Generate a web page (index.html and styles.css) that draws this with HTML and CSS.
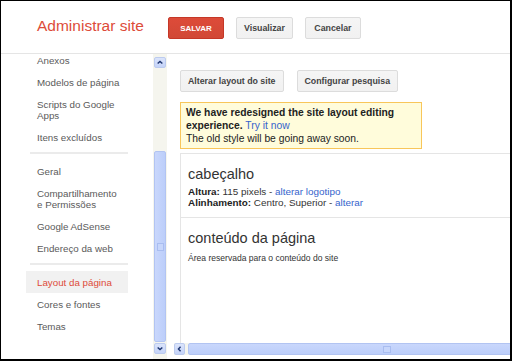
FILE: index.html
```html
<!DOCTYPE html>
<html lang="pt">
<head>
    <meta charset="UTF-8">
    <title>Administrar site</title>
    <link rel="stylesheet" href="styles.css">
</head>
<body>

<div class="frame">
    <header class="topbar">
        <div class="site-title">Administrar site</div>
        <div class="top-actions">
            <button class="btn btn-save">SALVAR</button>
            <button class="btn">Visualizar</button>
            <button class="btn">Cancelar</button>
        </div>
    </header>

    <div class="workspace">
        <nav class="sidebar">
            <ul class="nav-list">
                <li class="nav-item">Anexos</li>
                <li class="nav-item">Modelos de página</li>
                <li class="nav-item">Scripts do Google Apps</li>
                <li class="nav-item">Itens excluídos</li>
                <li class="nav-sep"></li>
                <li class="nav-item">Geral</li>
                <li class="nav-item">Compartilhamento e Permissões</li>
                <li class="nav-item">Google AdSense</li>
                <li class="nav-item">Endereço da web</li>
                <li class="nav-sep"></li>
                <li class="nav-item active">Layout da página</li>
                <li class="nav-item">Cores e fontes</li>
                <li class="nav-item">Temas</li>
            </ul>
        </nav>

        <div class="vscroll">
            <div class="sb-btn">
                <svg width="12" height="11" viewBox="0 0 12 11"><path d="M3.2 6.8 L6 4.2 L8.8 6.8" fill="none" stroke="#1d3570" stroke-width="1.7"/></svg>
            </div>
            <div class="vtrack">
                <div class="vthumb"><span class="grip"></span></div>
            </div>
            <div class="sb-btn">
                <svg width="12" height="11" viewBox="0 0 12 11"><path d="M3.2 4.2 L6 6.8 L8.8 4.2" fill="none" stroke="#1d3570" stroke-width="1.7"/></svg>
            </div>
        </div>

        <main class="main">
            <div class="main-scroll">
                <div class="layout-actions">
                    <button class="btn">Alterar layout do site</button>
                    <button class="btn">Configurar pesquisa</button>
                </div>

                <div class="notice">
                    <div><b>We have redesigned the site layout editing</b></div>
                    <div><b>experience.</b> <a href="#">Try it now</a></div>
                    <div>The old style will be going away soon.</div>
                </div>

                <div class="layout-box">
                    <section class="layout-section">
                        <h3>cabeçalho</h3>
                        <div class="meta">
                            <div><b>Altura:</b> 115 pixels - <a href="#">alterar logotipo</a></div>
                            <div><b>Alinhamento:</b> Centro, Superior - <a href="#">alterar</a></div>
                        </div>
                    </section>
                    <section class="layout-section">
                        <h3>conteúdo da página</h3>
                        <div class="desc">Área reservada para o conteúdo do site</div>
                    </section>
                </div>
            </div>

            <div class="hscroll">
                <div class="sb-btn">
                    <svg width="11" height="12" viewBox="0 0 11 12"><path d="M6.8 3.2 L4.2 6 L6.8 8.8" fill="none" stroke="#1d3570" stroke-width="1.7"/></svg>
                </div>
                <div class="hthumb"><span class="grip"></span></div>
            </div>
        </main>
    </div>
</div>

</body>
</html>
```

FILE: styles.css
```css
body {
    margin: 0;
    background: #fff;
    font-family: 'Liberation Sans', Arial, sans-serif;
}

.frame {
    width: 509px;
    height: 358px;
    border: solid #000;
    border-width: 1px 2px 2px 1px;
    display: flex;
    flex-direction: column;
    overflow: hidden;
    background: #fff;
}

/* top bar */
.topbar {
    height: 53px;
    box-sizing: border-box;
    border-bottom: 1px solid #e5e5e5;
    display: flex;
    align-items: flex-start;
    padding: 16px 0 0 36px;
    flex-shrink: 0;
}

.site-title {
    width: 131px;
    font-size: 15.5px;
    line-height: 17px;
    color: #dd4b39;
}

.top-actions {
    display: flex;
    gap: 12px;
}

.btn {
    height: 22px;
    min-width: 56px;
    box-sizing: border-box;
    padding: 0 7px;
    border: 1px solid #dcdcdc;
    border-radius: 2px;
    background: linear-gradient(#f5f5f5, #f1f1f1);
    color: #444;
    font-family: 'Liberation Sans', Arial, sans-serif;
    font-size: 8.8px;
    font-weight: bold;
    cursor: pointer;
}

.btn-save {
    background: linear-gradient(#dd4b39, #d14836);
    border-color: #c53727;
    color: #fff;
    font-size: 8px;
}

/* body */
.workspace {
    flex: 1;
    display: flex;
    min-height: 0;
}

.sidebar {
    width: 152px;
    flex-shrink: 0;
    overflow: hidden;
}

.nav-list {
    list-style: none;
    margin: -5px 0 0 25px;
    padding: 0;
    width: 102px;
}

.nav-item {
    padding: 6px 4px 5px 11px;
    font-size: 9.75px;
    line-height: 11px;
    color: #5a5a5a;
}

.nav-item.active {
    background: #f1f1f1;
    color: #dd4b39;
}

.nav-sep {
    height: 2px;
    background: #ebebeb;
    margin: 4px 0 6px 4px;
}

/* scrollbars */
.vscroll {
    width: 14px;
    flex-shrink: 0;
    background: #f5f5ee;
    display: flex;
    flex-direction: column;
    align-items: center;
    padding: 3px 0 5px;
    box-sizing: border-box;
}

.sb-btn {
    width: 12px;
    height: 11px;
    box-sizing: border-box;
    background: linear-gradient(#dbe4fb, #c4d3f8);
    border: 1px solid #bccbef;
    border-radius: 2px;
    display: flex;
    align-items: center;
    justify-content: center;
    flex-shrink: 0;
}

.sb-btn svg {
    display: block;
}

.vtrack {
    flex: 1;
    display: flex;
    flex-direction: column;
    justify-content: flex-end;
    padding-bottom: 1px;
}

.vthumb {
    width: 12px;
    height: 191px;
    box-sizing: border-box;
    background: linear-gradient(to right, #c9d7fc, #bccefa);
    border: 1px solid #b2c4f2;
    border-radius: 2px;
    display: flex;
    align-items: center;
    justify-content: center;
}

.grip {
    width: 5px;
    height: 6px;
    border: 1px solid #a9bdf0;
    background: #c7d6fb;
}

.main {
    flex: 1;
    min-width: 0;
    display: flex;
    flex-direction: column;
}

.main-scroll {
    flex: 1;
    min-height: 0;
    overflow: hidden;
    padding: 16px 0 0 13px;
    display: flex;
    flex-direction: column;
}

.layout-actions {
    display: flex;
    gap: 13px;
}

.notice {
    width: 242px;
    box-sizing: border-box;
    margin-top: 10px;
    padding: 4px 5px 3px;
    border: 1px solid #f8c65a;
    background: #fffcdb;
    color: #222;
    font-size: 10.3px;
    line-height: 12.8px;
    white-space: nowrap;
}

.notice a,
.layout-section a {
    color: #3563cc;
    text-decoration: none;
}

.layout-box {
    flex: 1;
    width: 420px;
    margin-top: 4px;
    border-top: 1px solid #e5e5e5;
    border-left: 1px solid #e5e5e5;
}

.layout-section {
    padding: 12px 0 9px 7px;
    border-bottom: 1px solid #e5e5e5;
}

.layout-section:last-child {
    border-bottom: none;
}

.layout-section h3 {
    margin: 0;
    font-size: 14.5px;
    line-height: 17px;
    font-weight: normal;
    color: #333;
}

.meta {
    margin-top: 3px;
    font-size: 9.9px;
    line-height: 11px;
    color: #333;
}

.meta b {
    color: #222;
}

.desc {
    margin-top: 6px;
    font-size: 8.55px;
    line-height: 11px;
    color: #333;
}

.hscroll {
    height: 12px;
    margin: 0 0 4px 7px;
    display: flex;
    gap: 3px;
    overflow: hidden;
    background: #f5f5ee;
    flex-shrink: 0;
}

.hscroll .sb-btn {
    width: 11px;
    height: 12px;
}

.hthumb {
    width: 398px;
    flex-shrink: 0;
    box-sizing: border-box;
    background: linear-gradient(#c9d7fc, #bccefa);
    border: 1px solid #b2c4f2;
    border-radius: 2px;
    display: flex;
    align-items: center;
    justify-content: center;
}

.hthumb .grip {
    width: 6px;
    height: 5px;
}
```
